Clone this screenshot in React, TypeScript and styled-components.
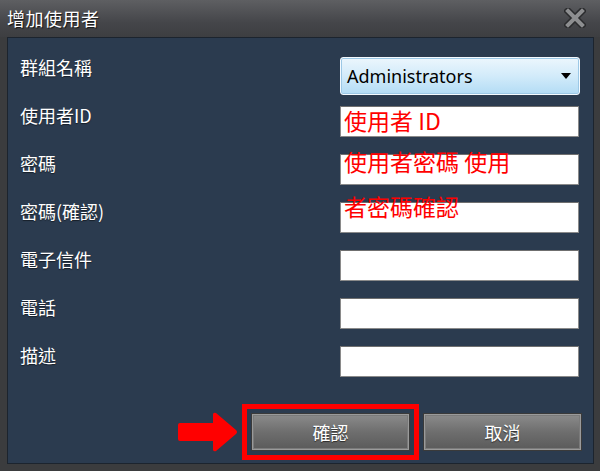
import React, { useState } from 'react';
import styled, { createGlobalStyle } from 'styled-components';

const GlobalStyle = createGlobalStyle`
  html, body {
    margin: 0;
    padding: 0;
    background: #3b3c3e;
  }
  * { box-sizing: border-box; }
`;

const Window = styled.div`
  width: 600px;
  height: 471px;
  background: #3b3c3e;
  display: flex;
  flex-direction: column;
  font-family: "Noto Sans CJK TC", "Noto Sans", sans-serif;
`;

const TitleBar = styled.div`
  height: 37px;
  flex: none;
  display: flex;
  align-items: center;
  justify-content: space-between;
  padding: 0 14px 2px 7px;
  background: linear-gradient(#5e5f62, #45464a 60%, #3d3e41);
`;

const Title = styled.div`
  color: #ffffff;
  font-size: 18px;
  letter-spacing: 0.5px;
  text-shadow: 1px 1px 1px rgba(0, 0, 0, 0.7);
`;

const Panel = styled.div`
  margin: 0 6px 7px 7px;
  flex: 1;
  background: #2b3b4f;
  border: 1px solid #1c242e;
  padding: 16px 11px 0 12px;
  display: flex;
  flex-direction: column;
`;

const Row = styled.div`
  height: 48px;
  display: flex;
  justify-content: space-between;
  align-items: flex-start;
`;

const Label = styled.div`
  color: #ffffff;
  font-size: 18px;
  line-height: 24px;
  margin-top: 1px;
  text-shadow: 0 1px 1px rgba(0, 0, 0, 0.5);
`;

const Field = styled.div<{ $top: number }>`
  position: relative;
  width: 240px;
  margin-top: ${({ $top }) => $top}px;
  margin-right: 2px;
`;

const Select = styled.div`
  height: 38px;
  display: flex;
  align-items: center;
  justify-content: space-between;
  padding: 0 8px 0 6px;
  border: 1px solid #f4faff;
  border-radius: 3px;
  background: linear-gradient(#ecf6fd, #d2ebfa 50%, #b3dcf5);
  box-shadow: inset 0 0 0 1px #9cc8e6;
  color: #000000;
  font-family: "Noto Sans", sans-serif;
  font-size: 18px;
`;

const Input = styled.input`
  width: 239px;
  height: 31px;
  display: block;
  border: 1px solid #8a8a8a;
  border-top-color: #6f6f6f;
  background: #ffffff;
  padding: 0 3px 4px;
  color: #ff0000;
  font-family: "Noto Sans CJK TC", sans-serif;
  font-size: 23px;
  outline: none;
`;

const Annotation = styled.div`
  position: absolute;
  z-index: 2;
  left: 4px;
  top: -15px;
  color: #ff0000;
  font-size: 23px;
  line-height: 45px;
  white-space: nowrap;
  pointer-events: none;
`;

const ButtonRow = styled.div`
  display: flex;
  justify-content: flex-end;
  align-items: center;
  margin-top: 22px;
`;

const Button = styled.button<{ $marked?: boolean }>`
  width: 159px;
  height: 38px;
  margin-left: 13px;
  border: 1px solid #3a3a3a;
  box-shadow: inset 0 0 0 1px #9a9a9a, inset 0 0 0 2px #7a7a7a;
  background: linear-gradient(#8c8c8c, #6e6e6e 50%, #5a5a5a);
  color: #ffffff;
  font-family: "Noto Sans CJK TC", sans-serif;
  font-size: 18px;
  text-shadow: 0 1px 1px rgba(0, 0, 0, 0.6);
  cursor: pointer;
  outline: ${({ $marked }) => ($marked ? '5px solid #ff0000' : 'none')};
  outline-offset: 4px;
`;

const Arrow = styled.svg`
  display: block;
`;

const CloseIcon = () => (
  <svg width="22" height="20" viewBox="0 0 22 20">
    <g strokeLinecap="square">
      <path d="M4 3 L18 17 M18 3 L4 17" stroke="#2a2b2d" strokeWidth="7" />
      <path d="M4 3 L18 17 M18 3 L4 17" stroke="#8d8e90" strokeWidth="4" />
    </g>
  </svg>
);

const fields = ['使用者ID', '密碼', '密碼(確認)', '電子信件', '電話', '描述'];

const App = () => {
  const [values, setValues] = useState<string[]>(['使用者 ID', '', '', '', '', '']);

  return (
    <Window>
      <GlobalStyle />
      <TitleBar>
        <Title>增加使用者</Title>
        <CloseIcon />
      </TitleBar>
      <Panel>
        <Row>
          <Label>群組名稱</Label>
          <Field $top={3}>
            <Select>
              <span>Administrators</span>
              <svg width="10" height="6" viewBox="0 0 10 6">
                <path d="M0 0 H10 L5 6 Z" fill="#000" />
              </svg>
            </Select>
          </Field>
        </Row>
        {fields.map((label, i) => (
          <Row key={label}>
            <Label>{label}</Label>
            <Field $top={4}>
              <Input
                value={values[i]}
                onChange={(e) => {
                  const next = [...values];
                  next[i] = e.target.value;
                  setValues(next);
                }}
              />
              {i === 1 && (
                <Annotation>
                  使用者密碼 使用
                  <br />
                  者密碼確認
                </Annotation>
              )}
            </Field>
          </Row>
        ))}
        <ButtonRow>
          <Arrow width="60" height="40" viewBox="0 0 60 40">
            <path
              d="M2 11 H35 V2 Q36 0 38 1 L58 18 Q60 20 58 22 L38 39 Q36 40 35 38 V29 H2 Q0 29 0 27 V13 Q0 11 2 11 Z"
              fill="#ff0000"
            />
          </Arrow>
          <Button $marked>確認</Button>
          <Button>取消</Button>
        </ButtonRow>
      </Panel>
    </Window>
  );
};

export default App;
